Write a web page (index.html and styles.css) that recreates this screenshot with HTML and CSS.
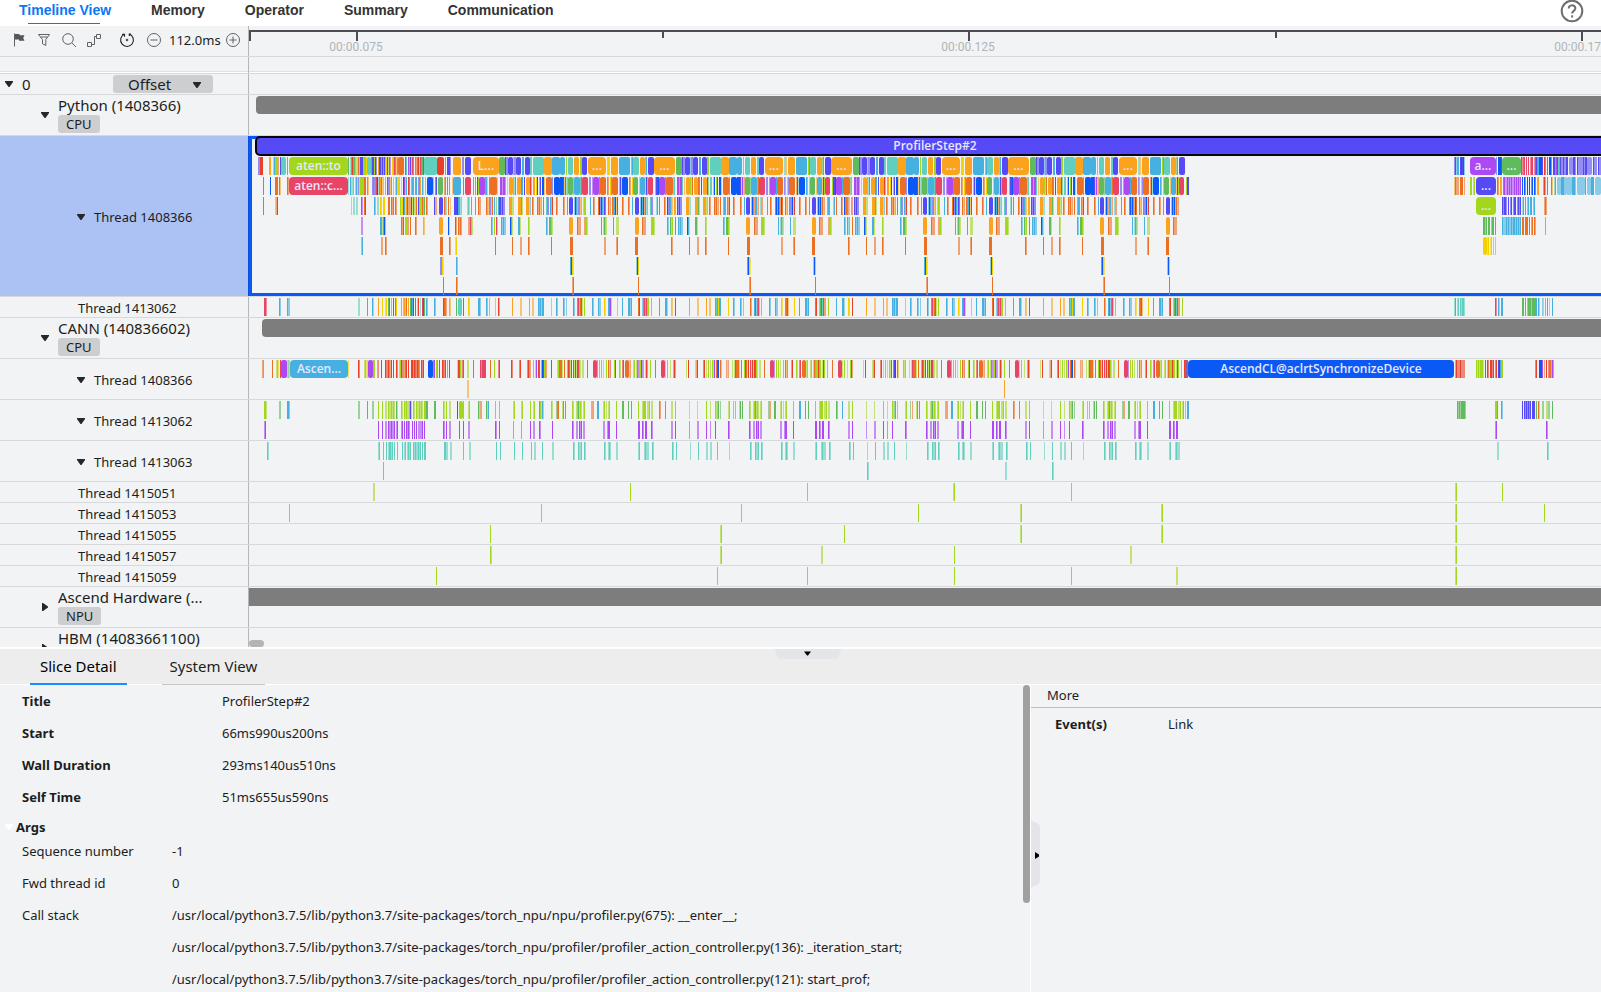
FILE: index.html
```html
<!DOCTYPE html>
<html lang="en">
<head>
<meta charset="utf-8">
<title>Timeline View</title>
<link rel="stylesheet" href="styles.css">
</head>
<body>
<svg class="defs" aria-hidden="true">
  <symbol id="down" viewBox="0 0 10 8"><path d="M1 1h8v1L5.500 7h-1L1 2z"/></symbol>
  <symbol id="right" viewBox="0 0 8 10"><path d="M1 1h1l5 3.500v1L2 9H1z"/></symbol>
</svg>

<nav class="top">
  <a class="tab active" href="#timeline">Timeline View</a>
  <a class="tab" href="#memory">Memory</a>
  <a class="tab" href="#operator">Operator</a>
  <a class="tab" href="#summary">Summary</a>
  <a class="tab" href="#communication">Communication</a>
  <button class="help" aria-label="Help"><svg width="24" height="24" viewBox="0 0 24 24"><circle cx="12" cy="12" r="10.300"/><path d="M8.700 9.600c0-4.300 6.700-4.200 6.700-.3 0 2.600-3.300 2.500-3.300 5.200"/><path d="M12.100 16.300v2.200"/></svg></button>
</nav>

<main class="timeline" id="timeline">
  <div class="row ruler">
    <div class="cell tools">
      <button aria-label="Flag"><svg width="16" height="16" viewBox="0 0 16 16"><path d="M3.500 1.500v13"/><path class="solid" d="M4 2h4.500v1.200H13.500l-1.300 2.800L13.500 8.700H8V7.500H4z" stroke="none"/></svg></button>
      <button aria-label="Filter"><svg width="16" height="16" viewBox="0 0 16 16"><path d="M2.500 2.500h11L9.800 7.500v6l-3.300-1.700V7.500z"/><path d="M4.500 5h7"/></svg></button>
      <button aria-label="Search"><svg width="16" height="16" viewBox="0 0 16 16"><circle cx="7" cy="7" r="5.300"/><path d="m11 11 4 4"/></svg></button>
      <button class="wide" aria-label="Link events"><svg width="16" height="16" viewBox="0 0 16 16"><path d="M1.500 10.500h4v4h-4zM10.500 2.500h4v4h-4zM5.500 12.500h3v-8h2"/></svg></button>
      <button class="dark" aria-label="Reset"><svg width="16" height="16" viewBox="0 0 16 16"><path d="M10.300 2.100a6.400 6.400 0 1 1-5 .2M5.500 4.800V2.200H3M10.300 4V2.100H12"/><circle class="solid" cx="8" cy="8" r="1.300" stroke="none"/></svg></button>
      <button aria-label="Zoom out"><svg width="16" height="16" viewBox="0 0 16 16"><circle cx="8" cy="8" r="6.500"/><path d="M4.500 8h7"/></svg></button>
      <output>112.0ms</output>
      <button aria-label="Zoom in"><svg width="16" height="16" viewBox="0 0 16 16"><circle cx="8" cy="8" r="6.500"/><path d="M4.500 8h7M8 4.500v7"/></svg></button>
    </div>
    <svg class="lane" id="ruler"></svg>
  </div>
  <div class="row strip"><div class="cell"></div></div>
  <div class="row rank">
    <div class="cell"><button class="caret" aria-label="Collapse"><svg width="10" height="8"><use href="#down"/></svg></button><span class="name">0</span>
      <label class="offset"><select aria-label="Offset"><option>Offset</option></select><svg width="10" height="8"><use href="#down"/></svg></label></div>
  </div>
  <div class="row group">
    <div class="cell"><button class="caret" aria-label="Collapse"><svg width="10" height="8"><use href="#down"/></svg></button><div><div class="name">Python (1408366)</div><span class="tag">CPU</span></div></div>
    <svg class="lane"><rect class="whole" x="7" y="1" rx="4"/></svg>
  </div>
  <div class="row thread selected">
    <div class="cell"><button class="caret" aria-label="Collapse"><svg width="10" height="8"><use href="#down"/></svg></button>Thread 1408366</div>
    <svg class="lane" data-lanes="py1 py2 py3 py4 py5 py6 py7"><rect class="step" x="7" y="1" rx="4"/><text x="686" y="14">ProfilerStep#2</text></svg>
  </div>
  <div class="row leaf"><div class="cell">Thread 1413062</div><svg class="lane" data-lanes="py8"></svg></div>
  <div class="row group">
    <div class="cell"><button class="caret" aria-label="Collapse"><svg width="10" height="8"><use href="#down"/></svg></button><div><div class="name">CANN (140836602)</div><span class="tag">CPU</span></div></div>
    <svg class="lane"><rect class="whole" x="13" y="1" rx="4"/></svg>
  </div>
  <div class="row thread"><div class="cell"><button class="caret" aria-label="Collapse"><svg width="10" height="8"><use href="#down"/></svg></button>Thread 1408366</div><svg class="lane" data-lanes="ca1 ca2"></svg></div>
  <div class="row thread"><div class="cell"><button class="caret" aria-label="Collapse"><svg width="10" height="8"><use href="#down"/></svg></button>Thread 1413062</div><svg class="lane" data-lanes="cb1 cb2"></svg></div>
  <div class="row thread"><div class="cell"><button class="caret" aria-label="Collapse"><svg width="10" height="8"><use href="#down"/></svg></button>Thread 1413063</div><svg class="lane" data-lanes="cc1 cc2"></svg></div>
  <div class="row leaf"><div class="cell">Thread 1415051</div><svg class="lane" data-lanes="t51"></svg></div>
  <div class="row leaf"><div class="cell">Thread 1415053</div><svg class="lane" data-lanes="t53"></svg></div>
  <div class="row leaf"><div class="cell">Thread 1415055</div><svg class="lane" data-lanes="t55"></svg></div>
  <div class="row leaf"><div class="cell">Thread 1415057</div><svg class="lane" data-lanes="t57"></svg></div>
  <div class="row leaf"><div class="cell">Thread 1415059</div><svg class="lane" data-lanes="t59"></svg></div>
  <div class="row group">
    <div class="cell"><button class="caret" aria-label="Expand"><svg width="8" height="10"><use href="#right"/></svg></button><div><div class="name">Ascend Hardware (...</div><span class="tag">NPU</span></div></div>
    <svg class="lane"><rect class="whole" x="0" y="1"/></svg>
  </div>
  <div class="row group last">
    <div class="cell"><button class="caret" aria-label="Expand"><svg width="8" height="10"><use href="#right"/></svg></button><div class="name">HBM (14083661100)</div></div>
  </div>
  <div class="hscroll"></div>
</main>

<section class="panel">
  <header class="panel-tabs">
    <button class="ptab current">Slice Detail</button>
    <button class="ptab">System View</button>
    <button class="fold-down" aria-label="Collapse panel"><svg width="70" height="10" viewBox="0 0 70 10"><path class="handle" d="M0 0h70c-4 1-3 10-8 10H8C3 10 4 1 0 0z"/><path d="M31 2.500h7L35 6.500h-1z"/></svg></button>
  </header>
  <div class="panel-body">
    <div class="detail">
      <dl class="facts">
        <dt>Title</dt><dd>ProfilerStep#2</dd>
        <dt>Start</dt><dd>66ms990us200ns</dd>
        <dt>Wall Duration</dt><dd>293ms140us510ns</dd>
        <dt>Self Time</dt><dd>51ms655us590ns</dd>
      </dl>
      <h2 class="args-title"><svg width="10" height="8"><use href="#down"/></svg>Args</h2>
      <dl class="args">
        <dt>Sequence number</dt><dd>-1</dd>
        <dt>Fwd thread id</dt><dd>0</dd>
        <dt>Call stack</dt><dd>/usr/local/python3.7.5/lib/python3.7/site-packages/torch_npu/npu/profiler.py(675): __enter__;<br>/usr/local/python3.7.5/lib/python3.7/site-packages/torch_npu/profiler/profiler_action_controller.py(136): _iteration_start;<br>/usr/local/python3.7.5/lib/python3.7/site-packages/torch_npu/profiler/profiler_action_controller.py(121): start_prof;</dd>
      </dl>
      <div class="vscroll"></div>
    </div>
    <aside class="more">
      <h2>More</h2>
      <dl><dt>Event(s)</dt><dd>Link</dd></dl>
      <button class="fold-right" aria-label="Collapse side panel"><svg width="10" height="70" viewBox="0 0 10 70"><path class="handle" d="M0 0c1 4 9 3 9 8v54c0 5-8 4-9 8z"/><path d="M4 33l4 2.500v2L4 40z"/></svg></button>
    </aside>
  </div>
</section>
<script src="timeline.js"></script>
</body>
</html>
```

FILE: styles.css
```css
* { box-sizing: border-box; }
body {
  margin: 0;
  height: 100vh;
  display: flex;
  flex-direction: column;
  overflow: hidden;
  background: #fff;
  color: #1c1d20;
  font: 13px/20px "Noto Sans", "Open Sans", sans-serif;
}
button { font: inherit; color: inherit; background: none; border: 0; padding: 0; display: flex; align-items: center; justify-content: center; }
h2, dl, dd { margin: 0; font: inherit; }
svg { display: block; }
.defs { position: absolute; width: 0; height: 0; }

.top { flex: none; height: 26px; display: flex; gap: 40px; padding: 0 17px 0 19px; }
.tab { height: 24px; font: bold 14px/20px "Liberation Sans", sans-serif; color: #333; text-decoration: none; }
.tab.active { color: #0a77f5; background: linear-gradient(#0a77f5, #0a77f5) 9px 23px / 72px 1px no-repeat; }
.help { margin: -1px 0 0 auto; width: 24px; height: 24px; }
.help svg { fill: none; stroke: #6e6e6e; stroke-width: 2; }

.timeline { position: relative; flex: 622 1 0; min-height: 0; overflow: hidden; background: #f1f3f5; border-bottom: 2px solid #fff; }
.row { display: grid; grid-template-columns: 249px 1fr; border-bottom: 1px solid #d7d8da; }
.cell { display: flex; align-items: center; border-right: 1px solid #b5b6b8; overflow: hidden; }
.lane { width: 100%; height: 100%; overflow: hidden; }
.name { font-size: 15px; line-height: 20px; white-space: nowrap; }
.caret { flex: none; width: 10px; height: 12px; fill: #262729; }

.ruler { height: 31px; }
.strip { height: 17px; box-shadow: inset 0 -1px #fff, inset 0 -2px #dfe0e2; }
.rank { height: 21px; }
.rank .cell { padding-left: 4px; gap: 8px; }
.offset { position: relative; margin-left: auto; margin-right: 35px; width: 100px; height: 18px; }
.offset select { appearance: none; display: block; width: 100%; height: 18px; padding: 0 15px; border: 0; border-radius: 3px; background: #cdced0; color: inherit; font: 15px/18px "Noto Sans", sans-serif; }
.offset svg { position: absolute; right: 11px; top: 6px; fill: #262729; pointer-events: none; }
.group { height: 41px; }
.group .cell { padding-left: 40px; gap: 8px; }
.group.last .name { align-self: flex-start; }
.tag { display: block; width: max-content; padding: 0 8px; border-radius: 3px; background: #cdced0; font-size: 13px; line-height: 18px; margin-bottom: 2px; }
.thread { height: 41px; }
.thread .cell { padding: 2px 0 0 76px; gap: 8px; }
.selected { height: 161px; }
.selected .cell { background: #acc2f5; border-color: #0a4fd8; }
.selected .lane { box-shadow: inset 3px 3px #0a59f7, inset 0 -3px #0a59f7; }
.leaf { height: 21px; }
.leaf .cell { padding: 1px 0 0 78px; }

.tools { padding: 0 8px 2px 11px; }
.tools button { flex: none; width: 16px; height: 16px; margin-right: 9px; }
.tools button.wide { margin-right: 17px; }
.tools output { width: 49px; margin: 0 7px 0 -2px; white-space: nowrap; }
.tools svg { fill: none; stroke: #626365; stroke-width: 1; }
.tools .dark svg { stroke: #222; stroke-width: 1.1; }
.tools .solid { fill: #55565a; }
.tools .dark + button { margin-left: 2px; }

.whole { width: 100%; height: 18px; fill: #7d7d7d; }
.step { width: 100%; height: 18px; fill: #564af7; stroke: #06060c; stroke-width: 2; }
.lane text { font: 600 12px "Open Sans", "Noto Sans", sans-serif; fill: #e8e8ff; text-anchor: middle; }
#ruler text { font: 12px Roboto, sans-serif; fill: #b2b3b5; }
#ruler rect { fill: #4b4d52; }
#ruler .axis { width: 100%; }
.hscroll { position: absolute; left: 249px; bottom: 0; width: 15px; height: 7px; border-radius: 4px; background: #b4b4b6; }

.panel { flex: 344 1 0; min-height: 0; display: flex; flex-direction: column; background: #f1f3f5; }
.panel-tabs { position: relative; flex: none; height: 36px; display: flex; gap: 35px; padding-left: 30px; background: #ededed; border-bottom: 1px solid #fff; }
.ptab { height: 36px; padding: 0 8px; font-size: 15px; border-bottom: 1px solid #c6c7c9; }
.ptab.current { padding: 0 10px; border-bottom: 2px solid #1a8cff; color: #000; }
.fold-down { position: absolute; left: 48.3%; top: 0; }
.handle { fill: #e3e5e8; }
.panel-body { flex: 1; min-height: 0; display: grid; grid-template-columns: 1031fr 570fr; }
.detail { position: relative; overflow: hidden; border-right: 1px solid #fff; }
.facts, .args { display: grid; grid-template-columns: 200px 1fr; padding-left: 22px; line-height: 32px; }
.args { grid-template-columns: 150px 1fr; white-space: nowrap; }
.facts dt, .args-title, .more dt { font-weight: bold; }
.args-title { display: flex; align-items: center; gap: 2px; margin-top: 7px; padding-left: 4px; line-height: 15px; }
.args-title svg { fill: #fff; }
.vscroll { position: absolute; right: 0; top: 0; width: 7px; height: 71%; border-radius: 4px; background: #a0a0a0; }
.more { position: relative; }
.more h2 { padding-left: 16px; height: 23px; line-height: 20px; border-bottom: 1px solid #bdbfc1; }
.more dl { display: grid; grid-template-columns: 113px 1fr; padding-left: 24px; line-height: 32px; }
.fold-right { position: absolute; left: 0; top: 134px; }
```

FILE: timeline.js
```js
// Slices are written as "<x><colour><width>"; an upper-case colour is a half-covered pixel.
const COLORS = { o: '#fca31e', d: '#ec7023', b: '#46b1e1', t: '#61cfbe', g: '#5fbb5b', l: '#a3d71e', p: '#564af7', v: '#ad49f3', r: '#e9402a', k: '#e84566', u: '#0a59f7', y: '#f5d000' };
const PERIOD = 177, ORIGIN = 249, NS = 'http://www.w3.org/2000/svg';

const LANES = {
  py1: { headEnd: 499, head: '18P 19P 20r3 29D 30o 33T 34b 35l3 38D 40p 41t5 47P 49l59:aten::to 108g 110T 111b 112r 113P 114g 115B 116L 117T 118d 119G 120p3 123l3 126y 127t4 131P 132p2 134l 135p 136P 138o 139p2 141P 142p 143P 144p 145D 146y 147p 148L 149v 150V 152y 153D 154k 155g 156O 157P 158d6 165v 166t 168v 169l 170p 171y 172k 173b 175g 176D 177d 178r 179T 180k 181b 182g 183r 184t13 197r7 205P 207p2 209p 210P 213o8 222P 223b 225p6 233o26:L...',
    loop: '0b5 6l 8t5 14o5 20l 21t 22p5 28o18:... 47T 48y 49O 51o7 59b11 71l 72b 73t6 80o5 85G 86b 88p6 94o21:... 116g6 122p 123P2 125p5 130B 131P2 133p5 139b2 142p5 147t 148l 150t11 161o8 169b8',
    tail: '54P 55p 56B 57b 58b 60p 61u 62p 63u 64B 70v26:a... 96P 98u3 101p 102g19:... 121k 122K 123d 124k 126k 128k 130K 131k 132k 134K 135k 136p 137g 138b2 139u3 142p 144r 145b 147k 149u2 151b 153p 154p 155P 156v 157p 158t 159P 160p 161P 162P 163p 164P 165P 166p2 169P4 173p2 175P 177p 178P3 181P2 183p 184P 185p2 187P5 193p 194P3 198p 199P2' },
  py2: { head: '23d 30u 35d3 39d 40O 47d 48D 49k59:aten::c... 108T 110b 111L 112T 113l 115T 116b 117O 118P 119L 120l3 123l 124d2 127P 128O 132P 133d 134P 135b 136k 137u 138T 139b 140o 141d 142O 143y 145o 147r 148P 149b 150O 151P 153y 155O 156b 157L 158y2 161O 163u 164v 165y 166b 168r 169b 171l 172b 173P 175P 176b 178P 179b 180o 182b 183T 185D 187u6 193G 195b 196p 198g5 204D 205b 207d 209P 212O 213b8 223d 225k6 233P 235P 237p 238l 239v6 245P 246b 247O 249g 250d7 257O',
    loop: '0u3 3p 4O 5v 6T 7D 8g5 13G 14b6 20t 21d 22k6 29P2 32V 33v6 39b 40d6 47P 48D 50y 51P 52d6 59D 60p 61T 62u6 69b 70D 72y 73g5 79O 80b5 85O 86p 87l 88k5 95l 96p2 98u 99v6 105b 106d7 113G 114t 117v2 119V 120v2 122t 124O 126o4 130l 131T 132d 134o4 138d 139b 141p 143o4 147r 148G 150t 151o 153y 154u 156l 157p 159u2 161O 163d6 169P 171u6',
    tail: '54O 55d 56D 57D 58D 60d3 64D 70l 71l 73L 74l 76p20:... 97d 98D 100o 101D 103d 104v 105l 106V 107v 108V 109v 110V 111v 112V 113V 114v 115V 116v 117V 118v 119V 120v 122u 124u 125b 127u 129u 131b 132u 134u 135d 137D 138o 143o 144r 145l 147d 151d 152O 154T 155b 157B4 161b3 164B2 166B6 172b3 175B 177B8 185b 187B4 191b3 195B6' },
  py3: { end: 1180, head: '23d 35O 36D 37r 111T 113T 114T 116T 117T 121v 122V 124d 125r 134b 135B 137T 138T 140y 141O 143y 144y 148d 149d 151d 152D 153d 155d 156D 160l 161L 162y 163r 164b 165L 166o 167k 168D 169l 170D 171p 172L 173k 174L 175T 176d 178p 179D 180l 181D 182d 183D 184g 186d 187D 194p 195G 196D 199p4 204d 205D 206T 208d 210O 214p2 216p 217u 218b 219P 220T 221B 227T 228t 229T 231P 235b 238d 239D 240D 246d 247D 248O 249b 250P 251T 252d 254b 256G 258b 259p',
    loop: '3d 4D 7b 9p4 14B 15u 16b 17D 18P 19b 20O 21D 23T 24l 25D 30b 33d 34D 38d 39u 40P 41u 42b 43D 44p 45d 48d 49O 50D 52d 53P 54b 55u 56O 57r 62d 63D 68d 69D 72b 75p4 80B 81u 82b 83u 84D 85d 86T 87D 90t 91b 92P 96T 97b 99d 104d 105D 107u 108P 109d 110b 111D 112O 114o 115D 117p 118P 119p 120P 121P 126o3 129L 130T 135o3 138g 139L 143o3 146L 147B 149d 150D 154d 155D 156d 157O 158D 160d 163t 164b 165P 167b 168D 169r 173d 174D',
    tail: '76l20:... 102p 103P 104p 105p 106P 108p 110P 111p 113P 114p 115p 117P 118p 119P 120p 122T 123b 125b 127B 128b 130b 131b 133B 134b 144D 145d 146D' },
  py4: { end: 1179, head: '121V 122V 140b 141b 142L 143g 144u 145B 161d 162D 163k 165D 166l 167D 168D 170d 175d 176D 183D 184O 199o4 208u 209L 215k 216D 218d 219D 220d 221D 228D 229l 230k 231l 232L 251b 252B 254l 256k 257O',
    loop: '9o4 17d 18D 19D 20D 24D 25l 26l 27L 41b 43T 44g 45G 46L 53b 56L 57L 58L 75o4 82d 83D 84D 85D 91D 92l 93l 94L 107b 108B 110g 111T 112l 115d 118b 119B 120b 121B 122B 127u 128b 129L 135b 136g 137L 145l 146L 163b 164B 166g 167g 168l 169L',
    tail: '83g 84g 85G 86g 88g 89g 91G 92g 93g 95g 102b 103B 104B 105B 106b 107B 108b 109B 110B 111b 112B 113b 114b 115B 116b 117B 118b 119B 120b 122d 123d 125d 126d 127d 129d 131D 132d 134d 135D 145K' },
  py5: { end: 1175, head: '121B 122b 141D 142D 145d 146D 200d3 209d 210D 215Y 216y 255d', loop: '10d3 44D 45D 56D 57d 75d3 111d 112D 129d 137D 138D 145d 146D 168d', tail: '83y4 87Y 88y 90Y 91y 93y 95y' },
  py6: { head: '200P 201b 202y 203Y 216b 217B', loop: '10b 11u 12y 13Y 76B 77u 78y' },
  py7: { head: '203d 216d 217D', loop: '12D 13d 78d' },
  py8: { head: '24k 25k 26K 39b 40B 47b 48B 49B 118T 119T 127b 132b 133T 138o 142y 145Y 146y 148g 149v 151l 153r 155d 156y 161o 163B 164o 165y 166d 168o 170g 171v 172b 173p 175k 177T 178r 180T 182k 183p 184g 186b 187B 194b 195B 203r 204d 205b 206D 209D 210O 216g 218t4 223k 228y 229L 238b 239b 240B 246b 247B 249B 255y 258r 259D',
    loop: '3b 4B 6B 13d 14B 17b 18k 19B 20d 21k 22L 24l 32b 33B 38b 39B 40B 44y 45Y 48b 49d 50v 51O 57y 62b 68b 69b 70B 71b 78d 79r 82B 83g 84k 85t 86k 87D 88l 91l 99b 105b 106b 107T 111y 112O 115r 129o 137O 138O 146o 149O 150O 155b 156t 157b 158y 159b 160b 168y 173b 174B',
    tail: '54T 55b 57T 58t 60t 61T 62t 63t 64T 95k 96K 98b 99T 101b 102b 122g 123g 125g 127G 128g 129g 130g 131G 132g 133g 134g 135g 136b 138b 139T 142B 143T 145t 147b 149T 152b' },
  ca1: { headEnd: 560, head: '22D 23R 32d 36L 37l 38Y 40k 41v6 47L 48G 49L 50b58:Ascen... 108Y 118r 119R 124L 125l 126Y 127L 128v5 133V 134l 137D 138R 141r 145r 146R 147R 148r 149R 150D 151r 153r 156r 157R 159L 160l 161r 162R 163R 164D 165d 166r 168r 171r 172r 173R 174r 175d 176R 177r 178d 179R 181r 182R 183r 188u5 193P 194v 196l 197R 199r 202r 203d 204R 205r 207R 209r 217L 218r 219v 220l 221L 222R 223k 227L 228L 233d 240k 241R 242k3 245v 250d 254l 258R 259r 271r 272R 279R 280r 287R 288r 289R 290D 293l 295L 296v 298r 299v 301V 302u 303p 304l 305R 306D 311r 317L 318l 319d3',
    loopAt: 640, loop: '0l 1r 2V 3l 5L 6r 7l 10l 15d 21k4 25L 27l 30L 33l 34r 35D 46L 48r 55L 56D 57r 63R 64r 66L 68l 70L 72l 73L 74v 76d 77p 78u 80d 81O 86D 87L 88D 92L 94L 95k 96d3 99L 101d 104l 105r 106d 107L 108r 110k 111L 112r 113L 114r 115k 116l 117L 119L 120L 124d 130k4 134V 136l 138l 140L 143l 145d 146O 147R 151l 152r 156l 157L 159R 160k 162d4 166L 167D 170L 171l 173L 174d 175V 176l',
    tailAt: 1180, tail: '4r 5v 6P 7v 8u266:AscendCL@aclrtSynchronizeDevice 275l 276r 277R 278R 279R 280r 281R 282R 283R 284R 296l 297L 298l 299L 300l 301l 302l 303L 305r 307r 308R 310r 311r 312R 313r 315R 316r 318p 319u 320b 321V 322l 355R 356r 359u3 362v 364D 366r 368R 369d 370d 371D 372v 373l' },
  ca2: { head: '227O 228O 764o' },
  cb1: { headEnd: 560, head: '24l 25l 26L 39G 40G 47g 48b 49G 118G 119G 127g 132G 133G 138l 142l 145L 146L 148l 149L 150L 151l 152L 153l 154L 156g 157L 161l 162L 164l 165L 166l 167L 168L 169l 170p 171L 173l 174L 176l 177L 178L 179l 180L 181l 182L 184l 185l 186g 187b 194g 195b 203l 204L 206l 209L 210L 217p 219l4 223l 228L 229l 238g 239T 240D 241D 246g 247T 248b 255l 259l 273L 274l 281L 282l 290l 293L 294l 299g 300l 301L 302b 303T 311l 312L 316G 317g 318d',
    loopAt: 640, loop: '2L 3l 4l 5l 7L 8L 9l 11L 12L 19g 20D 25b 31L 32L 35l 49L 57L 66l 70L 75l 76L 77G 78g 80G 88L 89l 93G 95D 99L 100g 102g 109l 110L 113L 114l 115g 116L 117l 118L 120L 121l 128G 129D 130D 134g 135b 140L 141l 143L 145L 146l 153l 159g 160b 165g 168g 175l',
    tailAt: 1180, tail: '3G 5G 7g 8b 277g 278G 279g 280G 281g 282g 283g 284g 285G 315l 316l 317g 321g 322B 342p 344p 345P 346p 347P 348p 349P 350p 352p 353p 354p 356g 358d 359O 362G 363G 366L 367L 368G 369G 372g' },
  cb2: { headEnd: 560, end: 1180, head: '24V 25v 138v 142v 145V 146V 148v 149V 150V 151v 152V 153V 154v 156V 157v 161V 162v 164v 166v 167V 168v 169V 172v 174v 176v 178V 179V 180V 181V 182v 184v 203v 204V 206v 209V 210V 219v 223v 228V 229V 255v 256V 259v 273V 281V 290v 293V 294V 299v 300V 312v',
    loopAt: 640, loop: '2v 3V 5v 6v 11v 12V 31V 32V 35v 49V 57V 58V 66v 70V 75v 88v 89V 109v 110V 113V 114V 116v 117V 118v 120V 121V 140V 141V 144V 145v 146v 153v 175v 176v', tailAt: 1180, tail: '315V 316v 366v 367V' },
  cc1: { headEnd: 560, end: 1181, head: '27t 28T 138T 139t 143t 146t 148T 149t 150t 151T 152t 154t 157t 162t 164T 165t 167T 168t 169T 170t 173t 174T 175t 176T 177T 178t 179T 180t 182t 184t 185t 204t 205t 206T 207T 210T 211T 223t 229T 230T 256t 260t 274t 282t 291t 294T 295T 302t 312T 313T',
    loopAt: 640, loop: '4T 5t 6T 7T 8T 12t 13T 32t 33T 36t 50T 58t 66T 67T 70T 71T 77t 89T 110t 111T 115t 116T 117T 118t 121t 122T 141t 142T 145T 146t 147T 153T 154T 175T 176t', tailAt: 1180, tail: '317T 318T 367t 368T' },
  cc2: { head: '143t 627t 628T 765T 766T 812t 813T' },
  t51: { head: '133L 134L 390l 567l 713L 714l 831l 1215L 1216l 1262l' },
  t53: { head: '49l 301l 501l 678l 780L 781l 921L 922l 1215L 1216l 1304l' },
  t55: { head: '250l 480L 481l 604l 780L 781l 921L 922l 1215L 1216l' },
  t57: { head: '250l 251L 480L 481l 581L 582L 714l 890L 891L 1215L 1216l' },
  t59: { head: '196l 477l 567l 714l 831l 936L 937L 1215L 1216l' }
};

function add(parent, tag, attrs, text) {
  const el = document.createElementNS(NS, tag);
  for (const k in attrs) el.setAttribute(k, attrs[k]);
  if (text) el.textContent = text;
  parent.append(el);
}

function drawSlices(svg, data, base, top, min, max) {
  for (const item of data.split(' ')) {
    const [, x, c, w, label] = item.match(/^(\d+)([a-zA-Z])(\d*)(?::(.*))?$/);
    const left = base + Number(x), width = Number(w || 1);
    if (left < min || left + width > max) continue;
    const key = c.toLowerCase();
    add(svg, 'rect', { x: left - ORIGIN, y: top, width, height: 18, fill: COLORS[key], opacity: c === key ? 1 : 0.6, rx: width > 14 ? 4 : width > 3 ? 2 : 0 });
    if (label) add(svg, 'text', { x: left - ORIGIN + width / 2, y: top + 13 }, label);
  }
}

for (const svg of document.querySelectorAll('[data-lanes]')) {
  const first = svg.querySelector('.step') ? 21 : 1;
  svg.dataset.lanes.split(' ').forEach((id, i) => {
    const lane = LANES[id], top = first + i * 20;
    drawSlices(svg, lane.head, 240, top, 0, 2000);
    if (lane.loop) for (let k = -1; k < 4; k++) drawSlices(svg, lane.loop, (lane.loopAt || 560) + k * PERIOD, top, lane.headEnd || 500, lane.end || 1189);
    if (lane.tail) drawSlices(svg, lane.tail, lane.tailAt || 1400, top, 0, 2000);
  });
}

const ruler = document.getElementById('ruler');
add(ruler, 'rect', { class: 'axis', x: 0, y: 4, height: 2 });
add(ruler, 'rect', { x: 0, y: 4, width: 2, height: 11 });
[[108, '00:00.075'], [414], [720, '00:00.125'], [1027], [1333, '00:00.175']].forEach(([x, label]) => {
  add(ruler, 'rect', { x: x - 1, y: 4, width: 2, height: label ? 11 : 8 });
  if (label) add(ruler, 'text', { x: x - 1, y: 25 }, label);
});
```
